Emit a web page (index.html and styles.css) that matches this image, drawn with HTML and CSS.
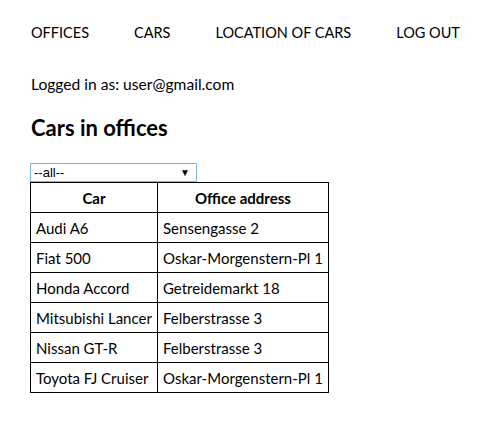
FILE: index.html
```html
<!DOCTYPE html>
<html>
<head>
<meta charset="utf-8">
<link rel="stylesheet" href="styles.css">
</head>
<body>
<div class="page">
  <nav class="nav">
    <a class="nav-link" href="#">OFFICES</a>
    <a class="nav-link" href="#">CARS</a>
    <a class="nav-link" href="#">LOCATION OF CARS</a>
    <a class="nav-link" href="#">LOG OUT</a>
  </nav>
  <p class="login">Logged in as: user@gmail.com</p>
  <h2 class="title">Cars in offices</h2>
  <div class="select">
    <span class="select-value">--all--</span>
    <span class="select-arrow">▼</span>
  </div>
  <table class="cars">
    <thead>
      <tr><th class="col-car">Car</th><th class="col-addr">Office address</th></tr>
    </thead>
    <tbody>
      <tr><td>Audi A6</td><td>Sensengasse 2</td></tr>
      <tr><td>Fiat 500</td><td>Oskar-Morgenstern-Pl 1</td></tr>
      <tr><td>Honda Accord</td><td>Getreidemarkt 18</td></tr>
      <tr><td>Mitsubishi Lancer</td><td>Felberstrasse 3</td></tr>
      <tr><td>Nissan GT-R</td><td>Felberstrasse 3</td></tr>
      <tr><td>Toyota FJ Cruiser</td><td>Oskar-Morgenstern-Pl 1</td></tr>
    </tbody>
  </table>
</div>
</body>
</html>
```
FILE: styles.css
```css
html, body {
  margin: 0;
  padding: 0;
  background: #fff;
}
body {
  font-family: Lato, "Open Sans", sans-serif;
  font-size: 15px;
  color: #000;
}
.page {
  padding: 24px 0 0 30px;
}
.nav {
  display: flex;
  gap: 45px;
  padding-left: 1px;
  line-height: 18px;
  font-size: 14.5px;
}
.nav-link {
  color: #000;
  text-decoration: none;
}
.login {
  margin: 33px 0 0 1px;
  line-height: 18px;
  font-size: 15.6px;
}
.title {
  margin: 22px 0 0 1px;
  font-size: 22px;
  line-height: 26px;
  font-weight: bold;
}
.select {
  margin-top: 22px;
  width: 167px;
  height: 19px;
  box-sizing: border-box;
  border: 1px solid #7eb4ea;
  display: flex;
  align-items: center;
  justify-content: space-between;
  padding: 0 6px 0 3px;
  font-family: "Liberation Sans", Arial, sans-serif;
  font-size: 13px;
}
.select-arrow {
  font-size: 10px;
}
.cars {
  border-collapse: collapse;
}
.cars th, .cars td {
  border: 1px solid #000;
  height: 30px;
  box-sizing: border-box;
  padding: 0 5px;
  text-align: left;
  white-space: nowrap;
}
.cars th {
  text-align: center;
  font-weight: bold;
}
.col-car {
  width: 127px;
}
.col-addr {
  width: 167px;
}
```
